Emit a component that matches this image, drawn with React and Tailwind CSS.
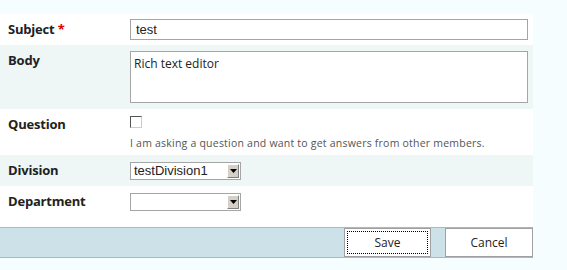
import React from 'react';

const label = "w-[130px] shrink-0 pl-2 text-[13px] font-bold text-[#222] font-['Open_Sans',sans-serif] tracking-[-0.2px]";

const Dropdown = ({ value }) => (
  <div className="flex h-[18px] w-[111px] items-center border border-[#a5a5a5] bg-white">
    <span className="flex-1 pl-[3px] text-[13px] leading-none text-[#222] font-['Liberation_Sans',sans-serif]">{value}</span>
    <span className="mr-[1px] flex h-[14px] w-[12px] items-center justify-center border border-t-white border-l-white border-r-[#808080] border-b-[#808080] bg-[#d4d0c8]">
      <svg width="7" height="4" viewBox="0 0 7 4"><path d="M0 0h7L3.5 4z" fill="#000" /></svg>
    </span>
  </div>
);

export default function App() {
  return (
    <div className="h-[270px] w-[567px] bg-[#f5fdfe] pt-[14px]">
      <div className="w-[533px]">
        {/* Subject */}
        <div className="flex h-[31px] items-center bg-white">
          <div className={label}>
            Subject <span className="text-[#d00]">*</span>
          </div>
          <div className="flex h-[21px] w-[398px] items-center border border-[#a5a5a5] bg-white pl-[5px] text-[13px] text-[#222] font-['Liberation_Sans',sans-serif]">
            test
          </div>
        </div>

        {/* Body */}
        <div className="flex h-[64px] items-start bg-[#eef6f6] pt-[6px]">
          <div className={label}>Body</div>
          <div className="h-[52px] w-[398px] border border-[#a5a5a5] bg-white pl-[3px] pt-[3px] text-[12px] text-[#222] font-['Open_Sans',sans-serif]">
            Rich text editor
          </div>
        </div>

        {/* Question */}
        <div className="flex h-[46px] items-start bg-white pt-[6px]">
          <div className={label}>Question</div>
          <div className="flex flex-col">
            <div className="mt-[1px] h-[12px] w-[12px] border border-t-[#555] border-l-[#555] border-r-[#ccc] border-b-[#ccc] bg-white" />
            <p className="mt-[8px] text-[10.5px] tracking-[0.22px] text-[#555] font-['Open_Sans',sans-serif]">
              I am asking a question and want to get answers from other members.
            </p>
          </div>
        </div>

        {/* Division */}
        <div className="flex h-[31px] items-center bg-[#eef6f6]">
          <div className={label}>Division</div>
          <Dropdown value="testDivision1" />
        </div>

        {/* Department */}
        <div className="flex h-[32px] items-center bg-white">
          <div className={label}>Department</div>
          <Dropdown value="" />
        </div>

        <div className="h-[9px] bg-white" />
      </div>

      {/* Button bar */}
      <div className="flex h-[31px] w-[533px] items-center justify-end gap-[14px] border-y border-[#a9b9bd] bg-[#cde2e8]">
        <button className="flex h-[29px] w-[87px] items-center justify-center border border-[#a0a0a0] bg-white p-[2px]">
          <span className="flex h-full w-full items-center justify-center border border-dotted border-black text-[12px] text-[#222] font-['Open_Sans',sans-serif]">
            Save
          </span>
        </button>
        <button className="flex h-[29px] w-[88px] items-center justify-center border border-[#a0a0a0] bg-white text-[12px] text-[#222] font-['Open_Sans',sans-serif]">
          Cancel
        </button>
      </div>
    </div>
  );
}
